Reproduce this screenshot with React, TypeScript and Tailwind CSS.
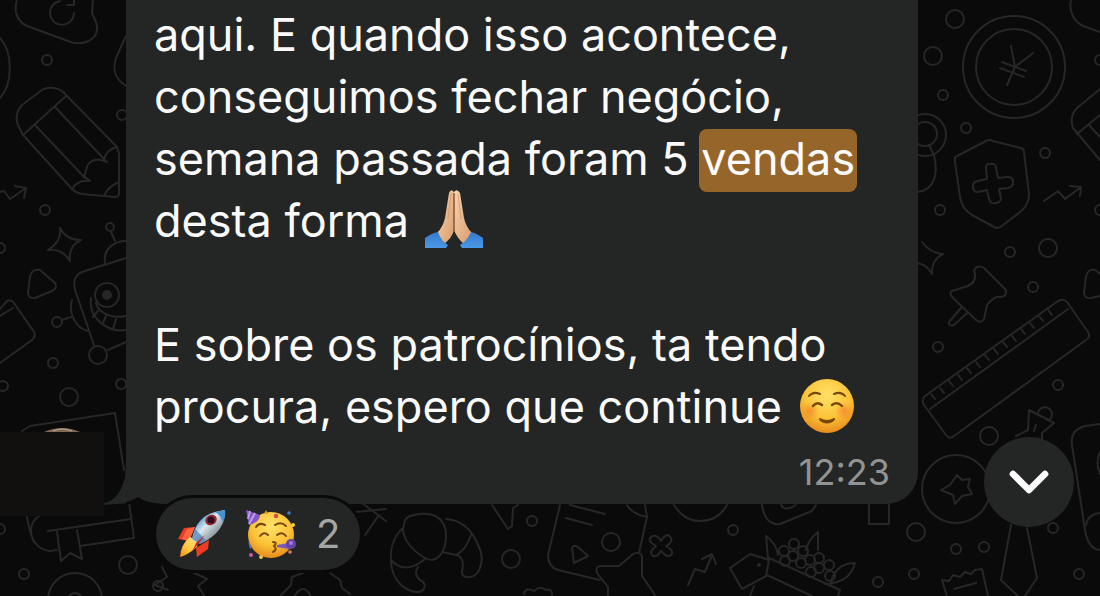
import { ChevronDown } from "lucide-react"

const smallDots = [
  [47, 60], [45, 210], [122, 115], [57, 322], [53, 363], [3, 386], [121, 384], [24, 574], [0, 529], [158, 586],
  [532, 521], [733, 530], [878, 582], [943, 95], [966, 128], [1045, 153], [940, 210], [1010, 252], [1033, 287],
  [1100, 210], [1100, 60], [938, 347], [1058, 385], [956, 549], [984, 547], [914, 574], [1053, 528], [1079, 574], [0, 248],
]

const largeDots = [
  [98, 355], [69, 397], [128, 565], [511, 559], [611, 542], [955, 19], [933, 56], [1048, 248], [989, 436], [916, 532],
]

const seeds = [
  [784, 551], [794, 544], [803, 551], [793, 556], [785, 561], [801, 563], [811, 572], [819, 558], [829, 565], [819, 568], [830, 576], [810, 560],
]

const doodles = [
  // camera blob and refresh arrow
  "M17 0C13 12 18 22 27 26L68 41C82 47 96 40 97 30C98 20 92 17 92 12L93 0",
  "M74 13A12 12 0 1 1 60 1M67 5H74V0",
  "M0 38C13 52 13 84 0 98M126 36L116 58C112 70 116 80 126 86",
  // pencil
  "M23 135L18 125C15 118 17 110 22 105L42 90C48 86 60 87 66 95L117 147L119 153V193Q119 197 115 197L82 194Q76 193 72 189ZM23 135L66 96M35 125L85 178M55 107L105 160",
  "M72 189Q78 179 90 181L84 176C88 170 84 166 92 161Q98 158 107 162L104 159Q107 149 117 147M105 194Q108 187 119 182",
  "M0 192L4 191L10 199L26 188M15 186L26 188L24 198",
  "M60 228Q66 240 81 240Q68 246 70 261Q62 248 48 250Q62 242 60 228Z",
  // robot
  "M111 232L115 241M105 263C103 248 115 241 126 241M126 258L85 271C75 274 73 280 75 290L94 345M72 300C68 312 75 328 88 331M62 320L71 317M108 350L126 342",
  "M91 298C88 318 108 333 126 330M96 303C98 313 112 319 126 316M98 311L93 317M106 316L103 323M116 319L113 329",
  "M30 277Q32 268 40 270L55 283Q58 288 52 291L35 298Q28 299 28 292Z",
  "M0 309L7 301Q11 299 14 303L34 332Q36 337 32 340L0 363M0 316L13 308",
  // laptop and book
  "M22 431L30 426L115 413L124 470M103 504L129 502L134 538L80 546M131 519L48 531M27 517C30 535 34 550 50 551L57 550M39 516C30 522 29 533 34 542",
  "M57 532L61 561L70 553L82 559L77 530",
  "M162 567L167 577L155 585L168 590M188 570L207 579L198 586L204 595M281 595L291 585L292 577L303 573M330 573L340 580L342 588L350 594M295 595Q304 583 310 595",
  "M356 512L386 509M365 535L379 515M362 503L386 521",
  // croissant
  "M405 520C408 515 420 513 428 514C440 515 446 525 446 535C446 550 440 558 432 560C424 560 404 545 403 530Z",
  "M403 528C392 538 390 552 391 562C392 580 405 592 418 592C426 591 427 583 420 580C415 575 415 572 418 567M391 560C400 570 412 570 425 559",
  "M446 519C462 520 472 530 478 545C484 556 482 565 478 572C472 580 462 578 462 572C464 562 462 556 456 555L442 552M471 535Q466 550 456 555",
  "M492 505L508 529L512 526L513 508L518 505",
  "M560 505L548 555Q548 567 558 570L600 580M566 518L592 525M570 505L605 514M572 548Q574 544 578 547L588 556L574 563Z",
  "M627 505Q632 514 647 517L639 553M645 505L647 517M608 595V587L597 573Q595 566 601 566H619L633 554Q640 551 642 556V576L655 595",
  "M524 594Q525 587 534 591Q540 585 546 590Q552 588 552 595",
  "M661 541Q667 531 671 538Q673 542 666 546Q675 551 671 555Q667 558 661 551Q656 559 652 555Q649 551 656 546Q647 541 651 537Q656 533 661 541Z",
  "M688 585L695 569L705 572L712 555M702 559L712 554L716 564",
  "M674 505Q684 521 700 521Q718 521 727 505M762 505C764 520 772 525 780 524L812 511L816 505M781 505Q785 512 796 505M869 500V524H889V500",
  // toucan with berries
  "M730 568L750 554L769 560L766 576L742 589ZM769 558L840 590L838 596M767 575L812 596M768 558L766 536Q776 543 778 555M806 550Q808 540 818 532V550M830 585Q835 563 855 563Q850 583 825 584M750 596L754 586",
  // yen coin
  "M1011 46L1015 67L1033 53M1015 67L1007 85M1002 62L1026 71M1000 68L1024 77",
  "M1071 0C1068 12 1075 22 1083 26L1100 32M929 145L934 155C938 172 936 190 917 192",
  // shield
  "M957 156Q954 157 955 162L960 197Q962 209 972 215L994 227Q998 229 1002 226L1020 212Q1029 205 1029 194L1024 152Q1024 149 1021 148L993 141Q989 139 986 141Z",
  "M986 168Q985 164 990 164Q996 163 996 168L998 178L1007 177Q1013 177 1013 181Q1014 187 1008 188L999 189L1001 199Q1000 203 995 203Q990 204 989 199L987 190L978 192Q973 192 973 187Q972 182 978 181L987 179Z",
  "M1044 201L1058 191L1065 199L1081 187M1070 186L1081 187L1080 196",
  "M1100 89L1077 108Q1069 116 1073 128L1100 160M1077 134L1100 115M1089 125L1100 137",
  "M922 242Q930 253 943 254Q931 260 932 274Q926 263 915 263",
  "M1086 277Q1088 268 1095 270L1103 276M1100 296L1091 298Q1084 299 1084 292L1086 277",
  // push pin
  "M974 270Q978 264 984 268L1006 290Q1007 297 1000 297Q995 295 987 305L984 319Q980 324 976 320L953 298Q947 291 955 290L968 286Q978 281 974 270ZM961 308L949 322Q948 327 954 325L967 313",
  // ruler
  "M925 396L1058 301Q1064 298 1067 302L1088 332Q1091 337 1086 340L954 436Q950 440 946 435L924 405Q921 400 925 396ZM930 409L1068 309",
  "M957 475L962 480L970 479L968 487L972 494L962 496L955 504L953 495L941 490L950 485Z",
  "M1016 436L1028 430L1029 410L1054 423L1042 433V440M1038 415A7 7 0 1 1 1049 420M1036 425L1034 431",
  // tie
  "M1011 525L1001 580L1018 596M1027 528L1037 578L1025 596",
  "M1100 424L1085 426Q1070 430 1072 445L1085 530Q1088 549 1100 550M1100 513Q1088 514 1086 525M1100 452Q1095 463 1100 474",
  "M947 596L942 580L949 581L953 575L960 577L965 572L971 574L975 570L982 569L988 596M954 589L976 583",
]

const rulerTicks = Array.from({ length: 14 }, (_, i) => `M${931 + i * 9} ${394 - i * 7 + Math.round(i / 2)}l4 5`).join("")

function Wallpaper() {
  return (
    <svg
      className="absolute inset-0 h-full w-full"
      viewBox="0 0 1100 596"
      preserveAspectRatio="xMidYMin slice"
      fill="none"
      stroke="#272727"
      strokeWidth="2"
      strokeLinejoin="round"
      strokeLinecap="round"
      aria-hidden="true"
    >
      {doodles.map((d) => (
        <path key={d} d={d} />
      ))}
      <path d={rulerTicks} />
      {smallDots.map(([x, y]) => (
        <circle key={`${x}-${y}`} cx={x} cy={y} r="5" />
      ))}
      {largeDots.map(([x, y]) => (
        <circle key={`${x}-${y}`} cx={x} cy={y} r="9" />
      ))}
      {seeds.map(([x, y]) => (
        <circle key={`${x}-${y}`} cx={x} cy={y} r="5" />
      ))}
      <circle cx="110" cy="227" r="4" />
      <circle cx="107" cy="295" r="12" />
      <circle cx="107" cy="295" r="4" fill="#272727" />
      <circle cx="759" cy="565" r="1" />
      <circle cx="75" cy="600" r="27" />
      <circle cx="75" cy="600" r="7" />
      <circle cx="1014" cy="67" r="51" />
      <circle cx="1014" cy="67" r="38" />
      <circle cx="925" cy="135" r="21" />
      <circle cx="925" cy="134" r="12" />
      <circle cx="956" cy="489" r="34" />
    </svg>
  )
}

function FoldedHands() {
  return (
    <svg className="-mt-1 ml-0.5 inline-block h-[60px] w-[60px] align-[-12px]" viewBox="0 0 60 60" role="img" aria-label="🙏🏼">
      <defs>
        <linearGradient id="skin" x1="0" x2="1" y1="0" y2="1">
          <stop offset="0" stopColor="#f6d5b0" />
          <stop offset="1" stopColor="#d99b6d" />
        </linearGradient>
        <linearGradient id="sleeve" x1="0" x2="0" y1="0" y2="1">
          <stop offset="0" stopColor="#3679c9" />
          <stop offset="1" stopColor="#4b99e8" />
        </linearGradient>
      </defs>
      <path d="M30 3Q27 -1 25 4L21 29Q19 38 13 44L20 55Q28 49 30 41Z" fill="url(#skin)" />
      <path d="M30 3Q33 -1 36 4L40 29Q42 38 48 44L40 55Q33 49 30 41Z" fill="url(#skin)" />
      <path d="M30 4V42" stroke="#8a5233" strokeWidth="1.5" fill="none" />
      <path d="M27 5L24 30M34 5L37 30" stroke="#c98f62" strokeWidth="1" fill="none" opacity=".6" />
      <path d="M1 49Q8 44 14 43Q17 52 24 56L22 59H1Z" fill="url(#sleeve)" />
      <path d="M59 49Q52 44 47 43Q43 52 36 56L38 59H59Z" fill="url(#sleeve)" />
    </svg>
  )
}

function FaceGradient({ id }: { id: string }) {
  return (
    <radialGradient id={id} cx=".5" cy=".3" r=".7">
      <stop offset="0" stopColor="#ffe26a" />
      <stop offset=".6" stopColor="#fbc338" />
      <stop offset="1" stopColor="#e98b1c" />
    </radialGradient>
  )
}

function Smiling() {
  return (
    <svg className="ml-1 inline-block h-[56px] w-[56px] align-[-11px]" viewBox="0 0 56 56" role="img" aria-label="☺️">
      <defs>
        <FaceGradient id="smile-face" />
        <radialGradient id="blush">
          <stop offset="0" stopColor="#f5702a" stopOpacity=".6" />
          <stop offset="1" stopColor="#f5702a" stopOpacity="0" />
        </radialGradient>
      </defs>
      <circle cx="28" cy="28" r="27" fill="url(#smile-face)" />
      <circle cx="11" cy="33" r="9" fill="url(#blush)" />
      <circle cx="45" cy="33" r="9" fill="url(#blush)" />
      <g fill="none" stroke="#78470c" strokeLinecap="round" strokeWidth="2.4">
        <path d="M10 18Q14 13 21 16M46 18Q42 13 35 16" strokeWidth="2" />
        <path d="M14 28Q18 23 23 27M33 27Q38 23 43 28" />
      </g>
      <path d="M21 40Q28 44 35 40Q37 40 35 43Q28 48 21 43Q19 40 21 40Z" fill="#78470c" />
    </svg>
  )
}

function Rocket() {
  return (
    <svg className="h-12 w-12" viewBox="0 0 48 48" role="img" aria-label="🚀">
      <defs>
        <linearGradient id="hull" x1=".2" y1=".2" x2=".8" y2=".8">
          <stop offset="0" stopColor="#3f89c8" />
          <stop offset=".4" stopColor="#dce8ef" />
          <stop offset="1" stopColor="#727e88" />
        </linearGradient>
        <linearGradient id="flame" x1="1" y1="0" x2="0" y2="1">
          <stop offset="0" stopColor="#ffe88a" />
          <stop offset=".6" stopColor="#ffc33a" />
          <stop offset="1" stopColor="#f18a1b" />
        </linearGradient>
      </defs>
      <path d="M17 17L6 18L0 29L11 31ZM31 30L30 39L19 47L18 38Z" fill="#ef3b22" />
      <path d="M9 19L17 17L11 31L4 29Z" fill="#ff6541" />
      <path d="M12 27Q3 34 2 47Q8 46 19 37L20 31Z" fill="url(#flame)" />
      <path d="M14 29Q18 7 37 2L47 0Q48 22 22 34Z" fill="url(#hull)" />
      <path d="M37 2L47 0Q48 5 45 13Q43 5 37 2Z" fill="#4591d1" />
      <path d="M14 29L17 19L28 30L22 34Z" fill="#336eaa" opacity=".6" />
      <ellipse cx="33" cy="10" rx="6" ry="5" fill="#9c2630" transform="rotate(-30 33 10)" />
      <circle cx="33" cy="10" r="3.5" fill="#251420" />
      <path d="M27 25L14 42L18 33Z" fill="#c62020" />
    </svg>
  )
}

function Partying() {
  return (
    <svg className="h-[50px] w-[50px]" viewBox="0 0 50 50" role="img" aria-label="🥳">
      <defs>
        <FaceGradient id="party-face" />
      </defs>
      <circle cx="25" cy="26" r="23" fill="url(#party-face)" />
      <path d="M0 1L14 6Q14 13 3 16Z" fill="#8158c6" />
      <path d="M4 2L2 10M9 4L3 15" stroke="#c09aeb" strokeWidth="2" />
      <g fill="none" stroke="#79480e" strokeLinecap="round" strokeWidth="2">
        <path d="M10 18Q13 13 19 16M29 16Q35 12 40 17M14 27Q18 22 22 26M31 26Q36 22 40 27" />
        <path d="M27 33Q32 33 28 37Q32 40 27 43" />
      </g>
      <path d="M31 36L43 34V40L31 38Z" fill="#7858bd" />
      <circle cx="45" cy="35" r="5" fill="#6546a5" />
      <circle cx="45" cy="34" r="2" fill="#a17ad5" />
      <path d="M18 5L20 1L22 5Z" fill="#e6a32b" />
      <circle cx="30" cy="7" r="2.2" fill="#d94b42" />
      <circle cx="43" cy="4" r="1.8" fill="#477cc1" />
      <circle cx="47" cy="16" r="2" fill="#f3c94b" />
      <circle cx="5" cy="46" r="2" fill="#c45ba7" />
      <circle cx="15" cy="48" r="2" fill="#ebc34c" />
      <circle cx="44" cy="43" r="1.8" fill="#df7d63" />
      <path d="M2 32L4 40L6 38Z" fill="#5178bd" />
    </svg>
  )
}

function Avatar() {
  return (
    <div className="absolute bottom-[80px] left-0 w-[104px]">
      <svg className="ml-11 block h-1 w-9" viewBox="0 0 36 4" aria-hidden="true">
        <path d="M0 4Q18 -4 36 4Z" fill="#806a56" />
        <path d="M9 3Q18 -1 28 3" fill="none" stroke="#c0a893" />
      </svg>
      <div className="h-[84px] bg-[#11100e]" />
    </div>
  )
}

function Message() {
  return (
    <article className="relative rounded-br-[32px] bg-[#242626] px-7 pt-1 pb-3">
      <svg className="absolute bottom-0 -left-[22px] h-[42px] w-[62px]" viewBox="0 0 62 42" aria-hidden="true">
        <path d="M22 0H62V42H22Z" fill="#0a0a0a" />
        <path d="M22 0H62V42Q43 42 34 35Q22 43 1 41Q16 37 21 15Z" fill="#242626" />
      </svg>
      <div className="relative text-[45px] leading-[62px] text-[#fafafa]">
        <p>
          aqui. E quando isso acontece,
          <br />
          conseguimos fechar negócio,
          <br />
          semana passada foram 5{" "}
          <mark className="-mx-0.5 rounded-lg bg-[#966529] px-0.5 pt-0.5 pb-1.5 text-[#fafafa]">vendas</mark>
          <br />
          desta forma <FoldedHands />
        </p>
        <p className="mt-[62px]">
          E sobre os patrocínios, ta tendo
          <br />
          procura, espero que continue <Smiling />
        </p>
      </div>
      <time className="relative mt-3.5 block text-right text-[36px] leading-10 text-[#929494]">12:23</time>
    </article>
  )
}

function Reactions() {
  return (
    <button
      type="button"
      aria-label="2"
      className="relative -mt-[6px] ml-[30px] flex h-[72px] items-center rounded-full bg-[#242626] pr-5 pl-[22px] ring-3 ring-[#0a0a0a]"
    >
      <Rocket />
      <span className="ml-5">
        <Partying />
      </span>
      <span className="ml-5 text-[40px] leading-none text-[#a4a5a5]">2</span>
    </button>
  )
}

export default function App() {
  return (
    <main className="relative min-h-screen overflow-hidden bg-[#0a0a0a] pr-[182px] pl-[126px] font-['Inter',sans-serif]">
      <Wallpaper />
      <Message />
      <Reactions />
      <Avatar />
      <button
        type="button"
        aria-label="Rolar para baixo"
        className="absolute right-[26px] bottom-[69px] flex h-[90px] w-[90px] items-center justify-center rounded-full bg-[#242626] text-white"
      >
        <ChevronDown className="h-16 w-16" strokeWidth={2.5} />
      </button>
    </main>
  )
}
